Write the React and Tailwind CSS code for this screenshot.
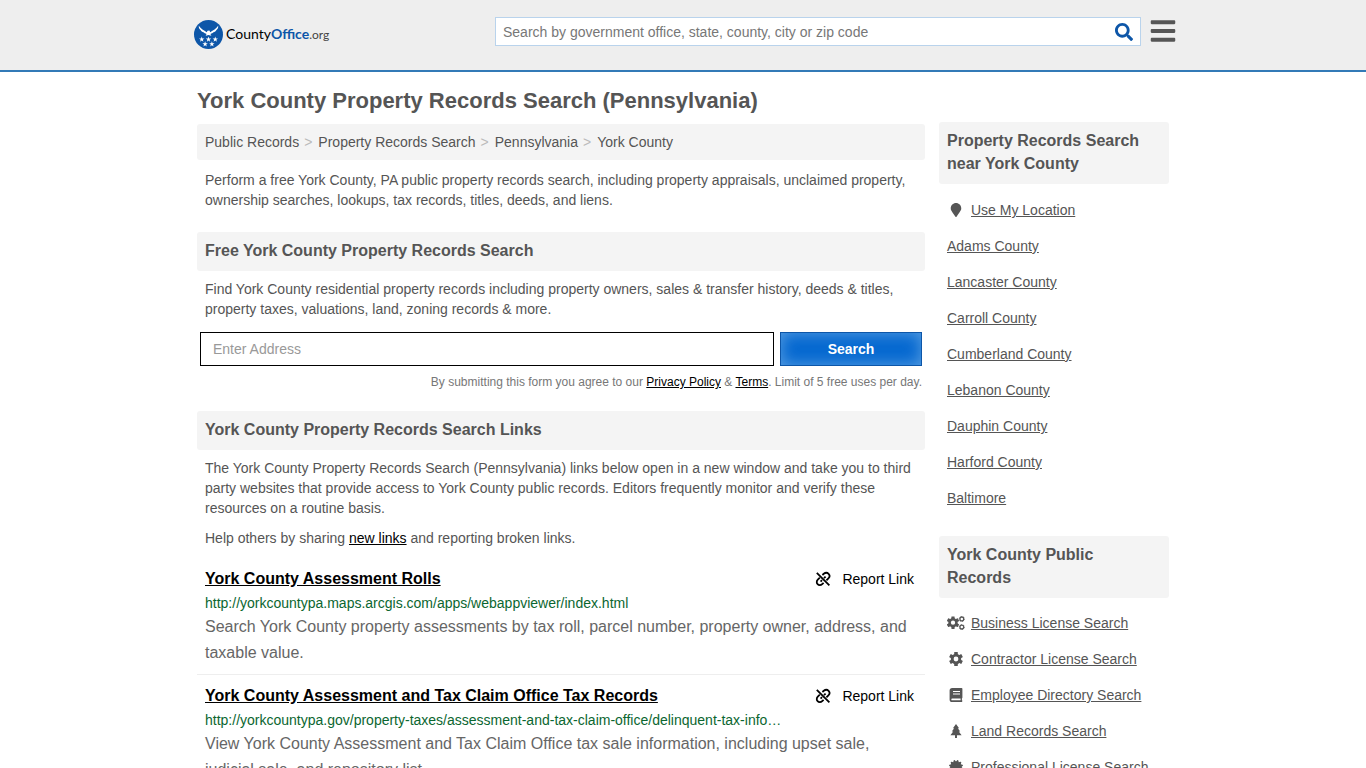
import React from "react";
import { FaBars, FaCertificate, FaMapMarker, FaSearch } from "react-icons/fa";

function PineTree({ className }) {
  return (
    <svg viewBox="0 0 16 20" fill="currentColor" className={className} aria-hidden="true">
      <path d="M8 0 12.4 6H10.6L14 10.6H12L16 16H9.4V20H6.6V16H0L4 10.6H2L5.4 6H3.6Z" />
    </svg>
  );
}

const TEETH = [0, 60, 120, 180, 240, 300];

function GearShape({ x, y, scale }) {
  return (
    <g transform={`translate(${x} ${y}) scale(${scale})`}>
      <circle r="3.8" fill="none" stroke="currentColor" strokeWidth="2.8" />
      {TEETH.map((angle) => (
        <rect key={angle} x="-1.8" y="-7" width="3.6" height="3" rx=".5" fill="currentColor" transform={`rotate(${angle})`} />
      ))}
    </g>
  );
}

function Gear({ className }) {
  return (
    <svg viewBox="0 0 14 14" className={className} aria-hidden="true">
      <GearShape x={7} y={7} scale={1} />
    </svg>
  );
}

function Gears({ className }) {
  return (
    <svg viewBox="0 0 18 14" className={className} aria-hidden="true">
      <GearShape x={6} y={6.7} scale={0.9} />
      <g fill="none" stroke="currentColor" strokeWidth="1.3">
        <circle cx="14.8" cy="2.9" r="1.9" />
        <circle cx="14.8" cy="11.1" r="1.9" />
      </g>
      <g fill="none" stroke="currentColor" strokeWidth=".7" strokeDasharray="1.2 1.5">
        <circle cx="14.8" cy="2.9" r="2.6" />
        <circle cx="14.8" cy="11.1" r="2.6" />
      </g>
    </svg>
  );
}

function Book({ className }) {
  return (
    <svg viewBox="0 0 14 14" className={className} aria-hidden="true">
      <path
        fill="currentColor"
        fillRule="evenodd"
        d="M3.2 0H12.6Q13.4 0 13.4 .8V9.6Q13.4 10.2 12.9 10.5V12.3Q13.4 12.5 13.4 13T12.8 14H3.2Q.6 14 .6 11.4V2.6Q.6 0 3.2 0ZM4 3V4H11V3ZM4 5.4V6.4H11V5.4ZM3.2 10.6Q2.3 10.6 2.3 11.4T3.2 12.3H11.6V10.6Z"
      />
    </svg>
  );
}

function BrokenLink({ className }) {
  return (
    <svg viewBox="0 0 16 16" fill="none" stroke="currentColor" strokeWidth="1.8" className={className} aria-hidden="true">
      <path d="M1.8 1.8 14.4 14.4" />
      <path d="M7.4 4 8.8 2.8C10.4 1.5 12.4 1.6 13.6 2.8 14.8 4.1 14.7 6.1 13.4 7.4L11.4 9.4" />
      <path d="M4.8 6.6 2.8 8.6C1.5 9.9 1.4 12 2.6 13.2 3.8 14.5 5.8 14.5 7.2 13.2L8.6 11.9" />
      <path d="M10.6 5.6 9 7.2M7 9.2 5.6 10.6" />
    </svg>
  );
}

const STAR = "M0-2.9 .7-.9 2.8-.9 1.1 .35 1.75 2.4 0 1.2 -1.75 2.4 -1.1 .35 -2.8-.9 -.7-.9Z";

function Logo() {
  return (
    <a href="#home" aria-label="CountyOffice.org" className="flex items-center gap-[3px] text-black">
      <svg viewBox="0 0 30 30" className="size-[29px]" aria-hidden="true">
        <circle cx="15" cy="15" r="15" fill="#0d56a8" />
        <path
          fill="#fff"
          d="M5 6C7 9.4 10.2 10.4 13.2 12.6L14 11.2 16 10.9 16.8 12.6C19.8 10.4 23 9.4 25 6 25.3 8 24.6 9.5 23 10.6 22.6 11.8 21.4 12.4 20.2 12.8 19.4 13.8 18.4 14.2 17 14.4L18 16.4 15 15.4 12 16.4 13 14.4C11.6 14.2 10.6 13.8 9.8 12.8 8.6 12.4 7.4 11.8 7 10.6 5.4 9.5 4.7 8 5 6Z"
        />
        <g fill="#fff">
          <path d={STAR} transform="translate(8 20)" />
          <path d={STAR} transform="translate(15 20)" />
          <path d={STAR} transform="translate(22 20)" />
          <path d={STAR} transform="translate(11.5 25)" />
          <path d={STAR} transform="translate(18.5 25)" />
        </g>
      </svg>
      <span className="font-[Lato,sans-serif] text-[14px] leading-5">
        County<span className="font-bold text-[#0d56a8]">Office</span>
        <span className="text-[12px] text-[#444]">.org</span>
      </span>
    </a>
  );
}

function SectionTitle({ children }) {
  return (
    <h2 className="rounded-[3px] bg-[#f4f4f4] px-2 pt-[7px] pb-[9px] text-[16px] leading-[23px] font-bold">
      {children}
    </h2>
  );
}

const crumbs = ["Public Records", "Property Records Search", "Pennsylvania", "York County"];

const results = [
  {
    title: "York County Assessment Rolls",
    url: "http://yorkcountypa.maps.arcgis.com/apps/webappviewer/index.html",
    text: "Search York County property assessments by tax roll, parcel number, property owner, address, and taxable value.",
  },
  {
    title: "York County Assessment and Tax Claim Office Tax Records",
    url: "http://yorkcountypa.gov/property-taxes/assessment-and-tax-claim-office/delinquent-tax-info…",
    text: "View York County Assessment and Tax Claim Office tax sale information, including upset sale, judicial sale, and repository list.",
  },
];

const nearby = [
  "Adams County",
  "Lancaster County",
  "Carroll County",
  "Cumberland County",
  "Lebanon County",
  "Dauphin County",
  "Harford County",
  "Baltimore",
];

const records = [
  { label: "Business License Search", Icon: Gears, size: "h-[14px] w-[18px]" },
  { label: "Contractor License Search", Icon: Gear, size: "size-[14px]" },
  { label: "Employee Directory Search", Icon: Book, size: "size-[14px]" },
  { label: "Land Records Search", Icon: PineTree, size: "h-[14px] w-[12px]" },
  { label: "Professional License Search", Icon: FaCertificate, size: "size-[14px]" },
];

function SideLink({ label, Icon, size }) {
  return (
    <li className="flex h-9 items-center px-2">
      {Icon && (
        <span className="flex w-6 shrink-0">
          <span className="flex w-[18px] justify-center">
            <Icon className={size} />
          </span>
        </span>
      )}
      <a href="#link" className="whitespace-nowrap underline">{label}</a>
    </li>
  );
}

function Result({ title, url, text }) {
  return (
    <li className="border-b border-[#eee] px-2 py-2">
      <div className="flex items-center justify-between pr-[3px] leading-[26px] text-black">
        <h3 className="text-[16px] font-bold">
          <a href="#result" className="underline">{title}</a>
        </h3>
        <a href="#report" className="flex items-center gap-[11px]">
          <BrokenLink className="size-4" />
          Report Link
        </a>
      </div>
      <p className="truncate leading-[22px] text-[#0b6630]">{url}</p>
      <p className="text-[16px] leading-[26px] text-[#666]">{text}</p>
    </li>
  );
}

export default function App() {
  return (
    <div className="h-screen overflow-hidden bg-white font-['Liberation_Sans',Arial,sans-serif] text-[14px] leading-5 text-[#555]">
      <header className="border-b-2 border-[#337ab7] bg-[#eee]">
        <div className="mx-auto flex h-[70px] w-full max-w-[988px] justify-between pl-[5px]">
          <div className="flex items-center pb-px">
            <Logo />
          </div>
          <div className="flex items-start gap-2 pt-[17px]">
            <form role="search" className="flex h-[29px] w-[646px] border border-[#b9d3ec] bg-white">
              <input
                type="text"
                aria-label="Search by government office, state, county, city or zip code"
                placeholder="Search by government office, state, county, city or zip code"
                className="min-w-0 flex-1 px-[7px] outline-none placeholder:text-[#777]"
              />
              <button type="button" aria-label="Search" className="flex w-8 items-center justify-center text-[#0d56a8]">
                <FaSearch className="size-[18px]" />
              </button>
            </form>
            <button type="button" aria-label="Menu" className="text-[#555]">
              <FaBars className="size-7" />
            </button>
          </div>
        </div>
      </header>

      <div className="mx-auto flex w-full max-w-[972px] justify-between gap-[14px]">
        <main className="min-w-0 max-w-[728px] flex-1">
          <h1 className="pt-[15px] pb-[9px] text-[22px] leading-7 font-bold">
            York County Property Records Search (Pennsylvania)
          </h1>
          <nav aria-label="Breadcrumb" className="rounded-[3px] bg-[#f4f4f4] p-2">
            <ol className="flex gap-[5px]">
              {crumbs.map((crumb, i) => (
                <li key={crumb} className="flex gap-1.5">
                  {i > 0 && <span className="text-[#bbb]">&gt;</span>}
                  <a href="#crumb">{crumb}</a>
                </li>
              ))}
            </ol>
          </nav>
          <p className="px-2 pt-[10px] pb-[22px]">
            Perform a free York County, PA public property records search, including property appraisals, unclaimed
            property, ownership searches, lookups, tax records, titles, deeds, and liens.
          </p>

          <SectionTitle>Free York County Property Records Search</SectionTitle>
          <p className="px-2 pt-2 pb-[13px]">
            Find York County residential property records including property owners, sales &amp; transfer history,
            deeds &amp; titles, property taxes, valuations, land, zoning records &amp; more.
          </p>
          <form className="flex h-[34px] gap-1.5 px-[3px]">
            <input
              type="text"
              aria-label="Enter Address"
              placeholder="Enter Address"
              className="min-w-0 flex-1 border border-black px-3 outline-none placeholder:text-[#999]"
            />
            <button
              type="button"
              className="w-[142px] border border-[#0d56a8] bg-[#0568d0] font-bold text-white shadow-[inset_0_0_16px_#5ba0e2]"
            >
              Search
            </button>
          </form>
          <p className="px-[3px] pt-[6px] pb-[19px] text-right text-[12px] text-[#777]">
            By submitting this form you agree to our{" "}
            <a href="#privacy" className="text-black underline">Privacy Policy</a> &amp;{" "}
            <a href="#terms" className="text-black underline">Terms</a>. Limit of 5 free uses per day.
          </p>

          <SectionTitle>York County Property Records Search Links</SectionTitle>
          <div className="flex flex-col gap-[10px] px-2 pt-2 pb-[10px]">
            <p>
              The York County Property Records Search (Pennsylvania) links below open in a new window and take you to
              third party websites that provide access to York County public records. Editors frequently monitor and
              verify these resources on a routine basis.
            </p>
            <p>
              Help others by sharing <a href="#new" className="text-black underline">new links</a> and reporting broken
              links.
            </p>
          </div>
          <ul>
            {results.map((r) => (
              <Result key={r.title} {...r} />
            ))}
          </ul>
        </main>

        <aside className="w-[230px] shrink-0 pt-[50px]">
          <SectionTitle>Property Records Search near York County</SectionTitle>
          <ul className="pt-2 pb-5">
            <SideLink label="Use My Location" Icon={FaMapMarker} size="size-[14px]" />
            {nearby.map((label) => (
              <SideLink key={label} label={label} />
            ))}
          </ul>
          <SectionTitle>York County Public Records</SectionTitle>
          <ul className="pt-[7px]">
            {records.map((r) => (
              <SideLink key={r.label} {...r} />
            ))}
          </ul>
        </aside>
      </div>
    </div>
  );
}
